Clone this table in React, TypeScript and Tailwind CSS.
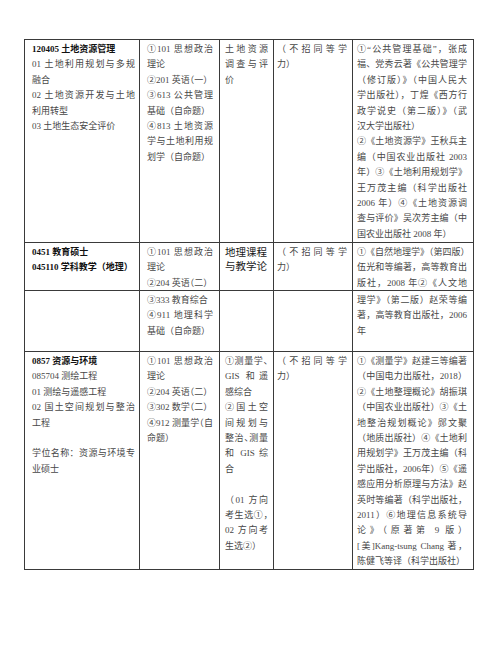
import type { ReactNode } from 'react';

type LineProps = { children: ReactNode; tight?: boolean };

// tight = Word-style half-width CJK punctuation, for lines that would not fit otherwise
const J = ({ children, tight }: LineProps) => (
  <div className={`text-justify [text-align-last:justify] ${tight ? "[font-feature-settings:'halt']" : ''}`}>{children}</div>
);
const P = ({ children, tight }: LineProps) => (
  <div className={`whitespace-nowrap ${tight ? "[font-feature-settings:'halt']" : ''}`}>{children}</div>
);
const Gap = () => <div className="h-[15.4px]" />;
const H = ({ children }: { children: ReactNode }) => (
  <div className="whitespace-nowrap font-bold text-[#111]">{children}</div>
);
// squeeze a trailing comma / dunhao in the narrow column
const S = ({ children }: { children: ReactNode }) => <span className="tracking-[-0.5em]">{children}</span>;

const c1 = 'w-[115px] shrink-0 border-r border-[#3a3a3a] pl-[7px] pr-[4px] pt-[2px]';
const c2 = 'w-[80px] shrink-0 border-r border-[#3a3a3a] pl-[7px] pr-[6px] pt-[2px]';
const c3 = 'w-[54px] shrink-0 border-r border-[#3a3a3a] pl-[5px] pr-[5px] pt-[2px]';
const c4 = 'w-[79px] shrink-0 border-r border-[#3a3a3a] pl-[3px] pr-[5px] pt-[2px]';
const c5 = 'w-[121px] shrink-0 border-r border-[#3a3a3a] pl-[4px] pr-[6px] pt-[2px]';

const NoEqual = () => (
  <>
    <J>（不招同等学</J>
    <P>力）</P>
  </>
);

export default function App() {
  return (
    <div
      className="min-h-[654px] w-[500px] bg-white pl-[24px] pt-[39px] text-[9px] leading-[15.4px] text-[#474747]"
      style={{ fontFamily: '"Liberation Serif", "Noto Sans CJK SC", serif' }}
    >
      <div className="flex w-[450px] flex-col border-l border-t border-[#3a3a3a]">
        {/* 120405 */}
        <div className="flex h-[203px] border-b border-[#3a3a3a]">
          <div className={c1}>
            <H>120405 土地资源管理</H>
            <J>01 土地利用规划与多规</J>
            <P>融合</P>
            <J>02 土地资源开发与土地</J>
            <P>利用转型</P>
            <P>03 土地生态安全评价</P>
          </div>
          <div className={c2}>
            <J>①101 思想政治</J>
            <P>理论</P>
            <P tight>②201 英语（一）</P>
            <J>③613 公共管理</J>
            <P>基础（自命题）</P>
            <J>④813 土地资源</J>
            <J>学与土地利用规</J>
            <P>划学（自命题）</P>
          </div>
          <div className={c3}>
            <J>土地资源</J>
            <J>调查与评</J>
            <P>价</P>
          </div>
          <div className={c4}>
            <NoEqual />
          </div>
          <div className={c5}>
            <J>①“公共管理基础”，张成</J>
            <J>福、党秀云著《公共管理学</J>
            <J>（修订版）》（中国人民大</J>
            <J>学出版社），丁煌《西方行</J>
            <J>政学说史（第二版）》（武</J>
            <P>汉大学出版社）</P>
            <J>②《土地资源学》王秋兵主</J>
            <J>编（中国农业出版社 2003</J>
            <J>年）③《土地利用规划学》</J>
            <J>王万茂主编（科学出版社</J>
            <J>2006 年）④《土地资源调</J>
            <J>查与评价》吴次芳主编（中</J>
            <P>国农业出版社 2008 年）</P>
          </div>
        </div>

        {/* 0451 */}
        <div className="flex h-[48px] border-b border-[#3a3a3a]">
          <div className={c1}>
            <H>0451 教育硕士</H>
            <H>045110 学科教学（地理）</H>
          </div>
          <div className={c2}>
            <J>①101 思想政治</J>
            <P>理论</P>
            <P tight>②204 英语（二）</P>
          </div>
          <div className={`${c3} pt-[3px] text-[10.5px] leading-[14px] text-[#1a1a1a]`}>
            <P>地理课程</P>
            <P>与教学论</P>
          </div>
          <div className={c4}>
            <NoEqual />
          </div>
          <div className={c5}>
            <J>①《自然地理学》（第四版）</J>
            <J>伍光和等编著，高等教育出</J>
            <J>版社，2008 年②《人文地</J>
          </div>
        </div>

        {/* continued */}
        <div className="flex h-[61px] border-b border-[#3a3a3a]">
          <div className={c1} />
          <div className={c2}>
            <P>③333 教育综合</P>
            <J>④911 地理科学</J>
            <P>基础（自命题）</P>
          </div>
          <div className={c3} />
          <div className={c4} />
          <div className={c5}>
            <J>理学》（第二版）赵荣等编</J>
            <J>著，高等教育出版社，2006</J>
            <P>年</P>
          </div>
        </div>

        {/* 0857 */}
        <div className="flex h-[218px] border-b border-[#3a3a3a]">
          <div className={c1}>
            <H>0857 资源与环境</H>
            <P>085704 测绘工程</P>
            <P>01 测绘与遥感工程</P>
            <J>02 国土空间规划与整治</J>
            <P>工程</P>
            <Gap />
            <J>学位名称：资源与环境专</J>
            <P>业硕士</P>
          </div>
          <div className={c2}>
            <J>①101 思想政治</J>
            <P>理论</P>
            <P tight>②204 英语（二）</P>
            <P tight>③302 数学（二）</P>
            <J tight>④912 测量学（自</J>
            <P>命题）</P>
          </div>
          <div className={c3}>
            <J>
              ①测量学<S>、</S>
            </J>
            <J>GIS 和遥</J>
            <P>感综合</P>
            <J>②国土空</J>
            <J>间规划与</J>
            <J>
              整治<S>、</S>测量
            </J>
            <J>和 GIS 综</J>
            <P>合</P>
            <Gap />
            <J>（01 方向</J>
            <J>
              考生选①<S>，</S>
            </J>
            <J>02 方向考</J>
            <P>生选②）</P>
          </div>
          <div className={c4}>
            <NoEqual />
          </div>
          <div className={c5}>
            <J>①《测量学》赵建三等编著</J>
            <J>（中国电力出版社，2018）</J>
            <J>②《土地整理概论》胡振琪</J>
            <J>（中国农业出版社）③《土</J>
            <J>地整治规划概论》郧文聚</J>
            <J>（地质出版社）④《土地利</J>
            <J>用规划学》王万茂主编（科</J>
            <J>学出版社，2006年）⑤《遥</J>
            <J>感应用分析原理与方法》赵</J>
            <J>英时等编著（科学出版社，</J>
            <J>2011）⑥地理信息系统导</J>
            <J>论》（原著第 9 版）</J>
            <J>[美]Kang-tsung Chang 著，</J>
            <P>陈健飞等译（科学出版社）</P>
          </div>
        </div>
      </div>
    </div>
  );
}
